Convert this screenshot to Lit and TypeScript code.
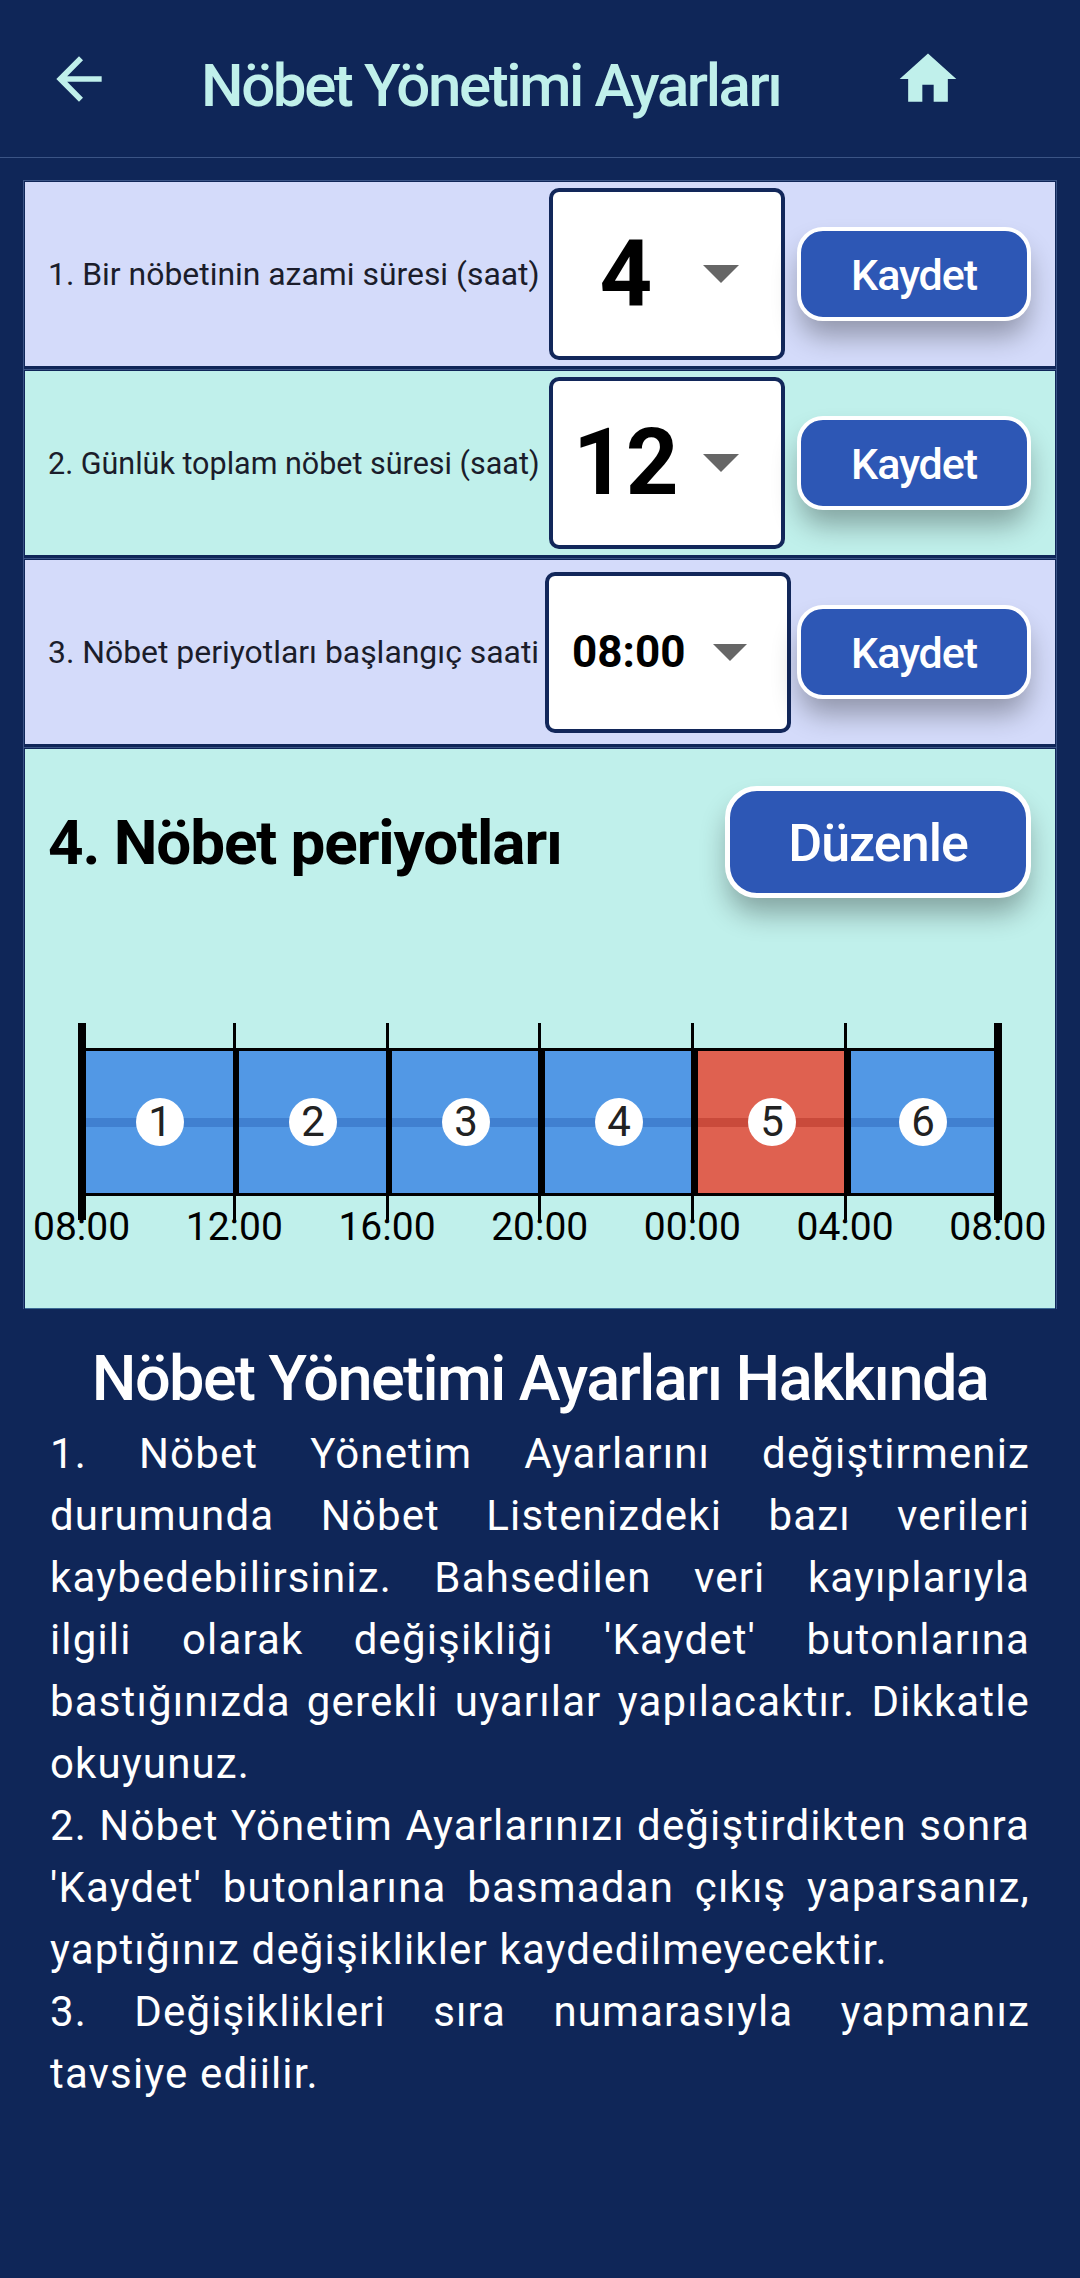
import { LitElement, html, css } from 'lit';
import { customElement } from 'lit/decorators.js';

const HOURS = ['08:00', '12:00', '16:00', '20:00', '00:00', '04:00', '08:00'];
const ACTIVE_PERIOD = 5;
const TICK_START = 56.6;
const TICK_STEP = 152.7;

@customElement('app-root')
export class AppRoot extends LitElement {
  static styles = css`
    :host {
      display: block;
      width: 1080px;
      height: 2278px;
      overflow: hidden;
      background: #0f2658;
      font-family: Roboto, sans-serif;
      color: #000;
    }

    .appbar {
      display: flex;
      align-items: center;
      height: 157px;
      padding: 0 118px 0 45px;
      box-sizing: content-box;
      width: 917px;
      border-bottom: 1px solid #3b5485;
      color: #c0f0eb;
    }

    .appbar svg {
      width: 68px;
      height: 68px;
      fill: currentColor;
      flex: none;
    }

    .appbar h1 {
      flex: 1;
      margin: 14px 0 0 88px;
      font-size: 60px;
      font-weight: 500;
      letter-spacing: -2.4px;
      white-space: nowrap;
    }

    .rows {
      margin: 22px 23px 0;
    }

    .row {
      box-sizing: border-box;
      height: 189px;
      padding: 1px 1px 3px;
      border: solid #3b5485;
      border-width: 1px 1px 0;
    }

    .fill {
      display: flex;
      align-items: center;
      height: 100%;
      padding: 0 24px 0 23px;
      box-sizing: border-box;
    }

    .lavender {
      background: #d4dbfa;
    }

    .mint {
      background: #c0f0eb;
    }

    .label {
      flex: 1;
      font-size: 31.9px;
      color: #1b1d2b;
      white-space: nowrap;
    }

    .label.fitted {
      font-size: 30.5px;
    }

    .select {
      box-sizing: border-box;
      display: flex;
      align-items: center;
      width: 236px;
      height: 172px;
      margin-right: 12px;
      padding-left: 23px;
      background: #fff;
      border: 4px solid #12275a;
      border-radius: 10px;
      font-weight: 700;
      font-size: 92px;
    }

    .select .value {
      width: 100px;
      text-align: center;
      line-height: 1;
    }

    .select .value.pair {
      margin: 0 3px 0 -3px;
    }

    .select .caret {
      margin-left: 27px;
      border-style: solid;
      border-width: 18px 18px 0;
      border-color: #666 transparent transparent;
    }

    .select.time {
      width: 246px;
      height: 161px;
      margin-right: 6px;
      padding-left: 23px;
      font-size: 44px;
    }

    .select.time .value {
      width: 110px;
    }

    .select.time .caret {
      margin-left: 31px;
      border-width: 17px 17px 0;
    }

    .btn {
      box-sizing: border-box;
      flex: none;
      display: flex;
      align-items: center;
      justify-content: center;
      background: #2d57b5;
      color: #fff;
      border: 4px solid #fff;
      font-family: inherit;
      font-weight: 500;
      box-shadow: 0 18px 28px -3px rgba(0, 0, 0, 0.32);
    }

    .btn.save {
      width: 234px;
      height: 94px;
      padding-top: 2px;
      border-radius: 26px;
      font-size: 43px;
      letter-spacing: -1.1px;
    }

    .btn.edit {
      width: 306px;
      height: 112px;
      padding-top: 3px;
      border-width: 5px;
      border-radius: 32px;
      font-size: 52px;
      letter-spacing: -1px;
    }

    .periods {
      box-sizing: border-box;
      height: 562px;
      padding: 1px;
      border: solid #3b5485;
      border-width: 1px 1px 0;
    }

    .periods .fill {
      display: block;
      padding: 37px 24px 0 23px;
      height: 560px;
      border-bottom: 1px solid #3b6a94;
    }

    .periods-head {
      display: flex;
      align-items: center;
      justify-content: space-between;
    }

    .periods-head h2 {
      margin: 0;
      font-size: 62px;
      font-weight: 700;
      letter-spacing: -1.1px;
      white-space: nowrap;
    }

    .timeline {
      position: relative;
      height: 240px;
      margin: 125px -24px 0 -23px;
    }

    .bar {
      position: absolute;
      left: 61px;
      top: 25px;
      width: 909px;
      height: 148px;
      box-sizing: border-box;
      display: flex;
      gap: 5px;
      padding: 3px 0;
      background: #000;
    }

    .seg {
      flex: none;
      width: 148px;
      display: flex;
      align-items: center;
      justify-content: center;
      background: linear-gradient(#4080d0, #4080d0) center / 100% 9px no-repeat #5298e5;
    }

    .seg:last-child {
      flex: 1;
      width: auto;
    }

    .seg.active {
      background: linear-gradient(#c94a3b, #c94a3b) center / 100% 9px no-repeat #df6150;
    }

    .seg span {
      width: 48px;
      height: 48px;
      border-radius: 50%;
      background: #fff;
      color: #222;
      font-size: 42px;
      line-height: 48px;
      text-align: center;
    }

    .hour {
      position: absolute;
      top: 180px;
      transform: translateX(-50%);
      font-size: 39px;
      line-height: 48px;
      white-space: nowrap;
    }

    .tick {
      position: absolute;
      top: 0;
      width: 3px;
      height: 197px;
      margin-left: -1.5px;
      background: #000;
    }

    .tick.end {
      width: 8px;
      margin-left: -4px;
    }

    .about {
      padding: 0 50px;
      color: #fff;
    }

    .about h2 {
      margin: 35px -30px 9px;
      font-size: 63px;
      line-height: 70px;
      font-weight: 500;
      letter-spacing: -1.6px;
      text-align: center;
      white-space: nowrap;
    }

    .about p {
      margin: 0;
      font-size: 42px;
      line-height: 62px;
      letter-spacing: 1.15px;
      text-align: justify;
    }
  `;

  private saveRow(label: string, value: string, tone: string, time = false, fitted = false) {
    return html`
      <div class="row">
        <div class="fill ${tone}">
          <div class="label ${fitted ? 'fitted' : ''}">${label}</div>
          <div class="select ${time ? 'time' : ''}">
            <span class="value ${value.length === 2 ? 'pair' : ''}">${value}</span>
            <span class="caret"></span>
          </div>
          <div class="btn save">Kaydet</div>
        </div>
      </div>
    `;
  }

  private timeline() {
    return html`
      <div class="timeline">
        ${HOURS.map(
          (h, i) => html`<span class="hour" style="left:${TICK_START + i * TICK_STEP}px">${h}</span>`
        )}
        <div class="bar">
          ${[1, 2, 3, 4, 5, 6].map(
            (n) => html`<div class="seg ${n === ACTIVE_PERIOD ? 'active' : ''}"><span>${n}</span></div>`
          )}
        </div>
        ${HOURS.map(
          (_, i) => html`<div
            class="tick ${i === 0 || i === HOURS.length - 1 ? 'end' : ''}"
            style="left:${TICK_START + i * TICK_STEP}px"
          ></div>`
        )}
      </div>
    `;
  }

  render() {
    return html`
      <header class="appbar">
        <svg viewBox="0 0 24 24"><path d="M20 11H7.83l5.59-5.59L12 4l-8 8 8 8 1.41-1.41L7.83 13H20v-2z" /></svg>
        <h1>Nöbet Yönetimi Ayarları</h1>
        <svg viewBox="0 0 24 24"><path d="M10 20v-6h4v6h5v-8h3L12 3 2 12h3v8z" /></svg>
      </header>

      <div class="rows">
        ${this.saveRow('1. Bir nöbetinin azami süresi (saat)', '4', 'lavender')}
        ${this.saveRow('2. Günlük toplam nöbet süresi (saat)', '12', 'mint', false, true)}
        ${this.saveRow('3. Nöbet periyotları başlangıç saati', '08:00', 'lavender', true)}
        <div class="periods">
          <div class="fill mint">
            <div class="periods-head">
              <h2>4. Nöbet periyotları</h2>
              <div class="btn edit">Düzenle</div>
            </div>
            ${this.timeline()}
          </div>
        </div>
      </div>

      <section class="about">
        <h2>Nöbet Yönetimi Ayarları Hakkında</h2>
        <p>1. Nöbet Yönetim Ayarlarını değiştirmeniz durumunda Nöbet Listenizdeki bazı verileri kaybedebilirsiniz. Bahsedilen veri kayıplarıyla ilgili olarak değişikliği 'Kaydet' butonlarına bastığınızda gerekli uyarılar yapılacaktır. Dikkatle okuyunuz.</p>
        <p>2. Nöbet Yönetim Ayarlarınızı değiştirdikten sonra 'Kaydet' butonlarına basmadan çıkış yaparsanız, yaptığınız değişiklikler kaydedilmeyecektir.</p>
        <p>3. Değişiklikleri sıra numarasıyla yapmanız tavsiye ediilir.</p>
      </section>
    `;
  }
}
